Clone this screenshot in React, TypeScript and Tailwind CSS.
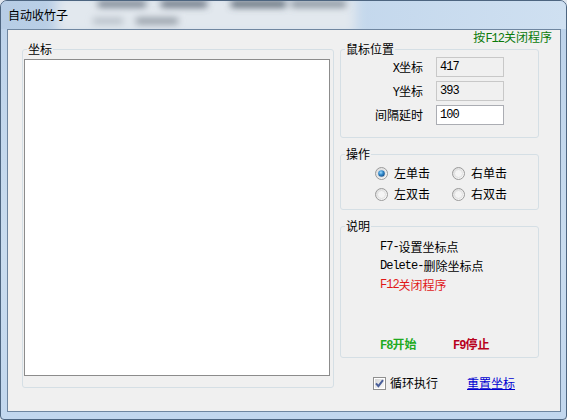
import type { ReactNode } from 'react';

// Small settings window for an auto-clicker, drawn in the Windows 7 look.

function Lt({ children }: { children: ReactNode }) {
  return <span className="font-['Liberation_Mono',monospace] text-[12px] leading-none tracking-[-1px]">{children}</span>;
}

function Radio({ checked = false }: { checked?: boolean }) {
  return (
    <svg width="13" height="13" viewBox="0 0 13 13" className="shrink-0">
      <defs>
        <linearGradient id="rbFace" x1="0" y1="0" x2="1" y2="1">
          <stop offset="0" stopColor="#d8d8d8" />
          <stop offset="1" stopColor="#ffffff" />
        </linearGradient>
        <radialGradient id="rbDot" cx="0.4" cy="0.35" r="0.7">
          <stop offset="0" stopColor="#9fdcff" />
          <stop offset="0.5" stopColor="#2f86c8" />
          <stop offset="1" stopColor="#174d86" />
        </radialGradient>
      </defs>
      <circle cx="6.5" cy="6.5" r="6" fill="url(#rbFace)" stroke="#9a9a9a" strokeWidth="1" />
      <circle cx="6.5" cy="6.5" r="4" fill="#f4f4f4" stroke="#dcdcdc" strokeWidth="0.8" />
      {checked && <circle cx="6.5" cy="6.5" r="3.3" fill="url(#rbDot)" />}
    </svg>
  );
}

function CheckBox() {
  return (
    <svg width="13" height="13" viewBox="0 0 13 13" className="shrink-0">
      <defs>
        <linearGradient id="cbFace" x1="0" y1="0" x2="1" y2="1">
          <stop offset="0" stopColor="#d6d6d6" />
          <stop offset="1" stopColor="#fbfbfb" />
        </linearGradient>
      </defs>
      <rect x="0.5" y="0.5" width="12" height="12" fill="#ffffff" stroke="#8f8f8f" />
      <rect x="2" y="2" width="9" height="9" fill="url(#cbFace)" />
      <path d="M3 6.3 L5.4 9.2 L10 3.2" fill="none" stroke="#4a5f9a" strokeWidth="2" />
    </svg>
  );
}

// fieldset keeps no padding so every legend sits at the same offset
function Group({
  title,
  className,
  body,
  children,
}: {
  title: string;
  className: string;
  body: string;
  children: ReactNode;
}) {
  return (
    <fieldset className={`flex flex-col rounded-[3px] border border-[#d5dfe5] ${className}`}>
      <legend className="ml-[4px] px-[1px] text-[12px] leading-[14px]">{title}</legend>
      <div className={body}>{children}</div>
    </fieldset>
  );
}

function Field({ label, value, editable }: { label: ReactNode; value: string; editable?: boolean }) {
  return (
    <div className="flex h-[20px] items-center gap-[13px]">
      <div className="w-[82px] text-right text-[12px]">{label}</div>
      <div
        className={
          editable
            ? 'flex h-[20px] w-[68px] items-center border border-[#abadb3] bg-white pl-[3px]'
            : 'flex h-[20px] w-[68px] items-center border border-[#c8c8c8] bg-[#f0f0f0] pl-[3px]'
        }
      >
        <Lt>{value}</Lt>
      </div>
    </div>
  );
}

function Option({ label, checked }: { label: string; checked?: boolean }) {
  return (
    <div className="flex w-[77px] items-center gap-[6px] text-[12px] leading-[16px]">
      <Radio checked={checked} />
      <span>{label}</span>
    </div>
  );
}

function Line({ className = '', children }: { className?: string; children: ReactNode }) {
  return <div className={`flex h-[19px] items-center ${className}`}>{children}</div>;
}

export default function App() {
  return (
    <div className="h-[420px] w-[567px] bg-[#dfe6ee] font-['Noto_Sans_CJK_SC',sans-serif] text-black">
      <div className="flex h-full flex-col rounded-t-[7px] rounded-b-[4px] border border-[#4d6580] bg-[linear-gradient(180deg,#bcd2ea,#c9dcef_60%,#c2d7ee)]">
        {/* title bar with the glassy backdrop */}
        <div className="relative flex h-[28px] items-center overflow-hidden rounded-t-[6px] pl-[7px]">
          <svg className="absolute inset-0" width="565" height="28" viewBox="0 0 565 28">
            <defs>
              <filter id="haze" x="-20%" y="-80%" width="140%" height="260%">
                <feGaussianBlur stdDeviation="3.5" />
              </filter>
              <filter id="hazeSoft" x="-20%" y="-80%" width="140%" height="260%">
                <feGaussianBlur stdDeviation="6" />
              </filter>
              <linearGradient id="glass" x1="0" y1="0" x2="1" y2="0">
                <stop offset="0" stopColor="#b7cde5" />
                <stop offset="0.6" stopColor="#c3d7ec" />
                <stop offset="1" stopColor="#cfe0f1" />
              </linearGradient>
            </defs>
            <rect width="565" height="28" fill="url(#glass)" />
            <rect x="55" y="-6" width="300" height="40" fill="#e2e8ee" filter="url(#hazeSoft)" />
            <g filter="url(#haze)">
              <rect x="97" y="0" width="48" height="6" fill="#6a7582" />
              <rect x="160" y="0" width="46" height="6" fill="#56626f" />
              <rect x="230" y="0" width="55" height="6" fill="#4c5865" />
              <rect x="290" y="0" width="55" height="6" fill="#7a8591" />
              <rect x="92" y="17" width="30" height="6" fill="#b3bbc4" />
              <rect x="135" y="17" width="42" height="6" fill="#8a939d" />
            </g>
          </svg>
          <span className="relative text-[12px] leading-[14px]">自动收竹子</span>
        </div>

        {/* client area */}
        <div className="mb-[7px] ml-[6px] mr-[5px] flex flex-1 flex-col border border-[#6f86a0] bg-[#f0f0f0]">
          <div className="flex h-[12px] justify-end pr-[8px]">
            <span className="text-[12px] leading-[14px] text-[#0a7a0a]">
              按<Lt>F12</Lt>关闭程序
            </span>
          </div>

          <div className="flex gap-[6px] pl-[14px]">
            <Group title="坐标" className="h-[346px] w-[312px]" body="flex-1 pb-[11px] pl-[1px] pr-[3px] pt-[3px]">
              <div className="h-full w-full border border-[#8c8c8c] bg-white" />
            </Group>

            <div className="flex w-[199px] flex-col">
              <Group title="鼠标位置" className="h-[96px]" body="flex flex-col gap-[4px] pt-[1px]">
                <Field label={<><Lt>X</Lt>坐标</>} value="417" />
                <Field label={<><Lt>Y</Lt>坐标</>} value="393" />
                <Field label="间隔延时" value="100" editable />
              </Group>

              <Group title="操作" className="mt-[9px] h-[63px]" body="flex flex-col gap-[5px] pl-[34px] pt-[4px]">
                <div className="flex">
                  <Option label="左单击" checked />
                  <Option label="右单击" />
                </div>
                <div className="flex">
                  <Option label="左双击" />
                  <Option label="右双击" />
                </div>
              </Group>

              <Group title="说明" className="mt-[9px] h-[139px]" body="pl-[39px] pt-[4px] text-[12px]">
                <Line>
                  <Lt>F7-</Lt>设置坐标点
                </Line>
                <Line>
                  <Lt>Delete-</Lt>删除坐标点
                </Line>
                <Line className="text-[#e01818]">
                  <Lt>F12</Lt>关闭程序
                </Line>
                <Line className="mt-[40px] font-bold">
                  <span className="w-[73px] text-[#1faa1f]">
                    <Lt>F8</Lt>开始
                  </span>
                  <span className="text-[#b8001c]">
                    <Lt>F9</Lt>停止
                  </span>
                </Line>
              </Group>

              <div className="mt-[17px] flex h-[16px] items-center pl-[33px] text-[12px]">
                <CheckBox />
                <span className="ml-[4px]">循环执行</span>
                <span className="ml-[29px] text-[#0000d0] underline">重置坐标</span>
              </div>
            </div>
          </div>
        </div>
      </div>
    </div>
  );
}
